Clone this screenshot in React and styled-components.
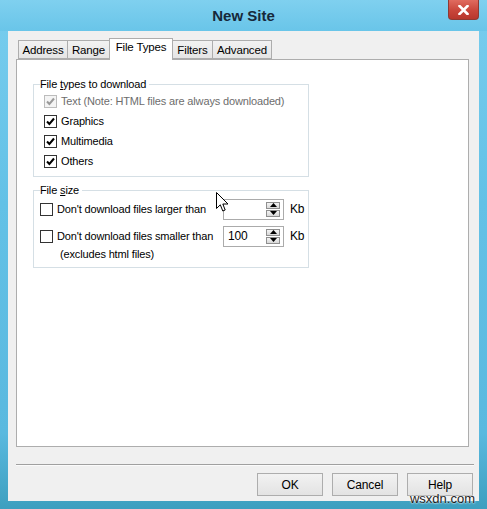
import React from 'react';
import styled, { createGlobalStyle } from 'styled-components';

const GlobalStyle = createGlobalStyle`
  html, body { margin: 0; padding: 0; }
  body {
    width: 487px;
    height: 509px;
    overflow: hidden;
    background: #5cbde2;
    font-family: "Liberation Sans", Arial, sans-serif;
    font-size: 11px;
    letter-spacing: -0.15px;
    color: #000;
  }
`;

const Window = styled.div`
  position: relative;
  width: 487px;
  height: 509px;
  display: flex;
  flex-direction: column;
  background: linear-gradient(180deg, #78cdee 0%, #63c1e6 40%, #5ab9df 85%, #3d9fbf 100%);
  box-sizing: border-box;
`;

const TitleBar = styled.div`
  height: 31px;
  display: grid;
  grid-template-columns: 1fr auto 1fr;
  align-items: start;
  background: linear-gradient(180deg, #7fd0ef 0%, #69c5e9 100%);
`;

const Title = styled.div`
  grid-column: 2;
  font-weight: 700;
  font-size: 15px;
  letter-spacing: 0;
  color: #16283a;
  line-height: 31px;
`;

const CloseButton = styled.div`
  grid-column: 3;
  justify-self: end;
  margin-right: 8px;
  width: 31px;
  height: 20px;
  box-sizing: border-box;
  border: 1px solid #8e3a33;
  border-top: none;
  border-radius: 0 0 4px 4px;
  background: linear-gradient(180deg, #e06b5f 0%, #c9463b 55%, #b8372d 100%);
  display: flex;
  align-items: center;
  justify-content: center;
`;

const Client = styled.div`
  flex: 1;
  margin: 0 8px 8px 8px;
  background: #f0f0f0;
  padding: 7px 5px 0 8px;
  display: flex;
  flex-direction: column;
`;

const TabStrip = styled.div`
  display: flex;
  align-items: flex-end;
  padding-left: 2px;
  height: 21px;
`;

const Tab = styled.div`
  position: relative;
  box-sizing: border-box;
  width: ${({ $w }) => $w}px;
  height: ${({ $active }) => ($active ? '22px' : '19px')};
  margin: ${({ $active }) => ($active ? '0 0 -1px -1px' : '0 0 0 -1px')};
  border: 1px solid #adadad;
  border-bottom: ${({ $active }) => ($active ? 'none' : '1px solid #adadad')};
  background: ${({ $active }) => ($active ? '#fff' : 'linear-gradient(180deg, #f2f2f2, #e5e5e5)')};
  z-index: ${({ $active }) => ($active ? 1 : 0)};
  line-height: ${({ $active }) => ($active ? '17px' : '19px')};
  font-size: 11.5px;
  text-align: center;
  white-space: nowrap;

  &:first-child { margin-left: 0; }
`;

const Panel = styled.div`
  height: 388px;
  box-sizing: border-box;
  margin-right: 5px;
  border: 1px solid #adadad;
  background: #fff;
  padding: 17px 0 0 16px;
  display: flex;
  flex-direction: column;
  gap: 6px;
`;

const GroupBox = styled.fieldset`
  width: 276px;
  box-sizing: border-box;
  margin: 0;
  border: 1px solid #d5dfe5;
  padding: ${({ $pad }) => $pad};
  display: flex;
  flex-direction: column;
  min-width: 0;
`;

const Legend = styled.legend`
  padding: 0 3px 0 0;
  margin-left: 0;
  line-height: 14px;
`;

const Hot = styled.span`
  text-decoration: underline;
`;

const CheckRow = styled.div`
  display: flex;
  align-items: center;
  height: 20px;
  gap: 4px;
  padding-left: ${({ $indent }) => $indent || 0};
  color: ${({ $disabled }) => ($disabled ? '#6d6d6d' : '#000')};
  white-space: nowrap;
`;

const Box = styled.span`
  width: 13px;
  height: 13px;
  box-sizing: border-box;
  border: 1px solid ${({ $disabled }) => ($disabled ? '#bcbcbc' : '#333')};
  background: ${({ $disabled }) => ($disabled ? '#f4f4f4' : '#fff')};
  display: flex;
  align-items: center;
  justify-content: center;
  flex-shrink: 0;
`;

const SizeRows = styled.div`
  display: flex;
  flex-direction: column;
  gap: 3px;
`;

const SizeRow = styled.div`
  display: grid;
  grid-template-columns: 177px 61px auto;
  column-gap: 6px;
  align-items: center;
  height: 24px;
`;

const NoteLine = styled.div`
  padding-left: 20px;
  line-height: 12px;
  white-space: nowrap;
`;

const SpinBox = styled.div`
  height: 21px;
  box-sizing: border-box;
  border: 1px solid #ababab;
  background: #fff;
  display: flex;
  align-items: center;
  justify-content: space-between;
  padding: 0 3px 0 4px;
  font-size: 12px;
`;

const SpinButtons = styled.div`
  display: flex;
  flex-direction: column;
  gap: 1px;
`;

const SpinBtn = styled.div`
  width: 14px;
  height: 7px;
  box-sizing: border-box;
  border: 1px solid #8f8f8f;
  background: linear-gradient(180deg, #f4f4f4, #d8d8d8);
  display: flex;
  align-items: center;
  justify-content: center;
`;

const Unit = styled.span`
  font-size: 12px;
`;

const Separator = styled.div`
  margin-top: 17px;
  height: 1px;
  background: #a0a0a0;
  border-bottom: 1px solid #fbfbfb;
`;

const ButtonRow = styled.div`
  display: flex;
  justify-content: flex-end;
  gap: 9px;
  margin: 7px 1px 0 0;
`;

const Button = styled.div`
  width: 66px;
  height: 23px;
  box-sizing: border-box;
  border: 1px solid #adadad;
  background: linear-gradient(180deg, #f2f2f2, #e3e3e3);
  display: flex;
  align-items: center;
  justify-content: center;
  font-size: 12px;
`;

const Cursor = styled.svg`
  position: absolute;
  left: 216px;
  top: 192px;
`;

const Watermark = styled.div`
  position: absolute;
  right: 12px;
  bottom: 3px;
  font-size: 13px;
  letter-spacing: 0;
  color: #1c1c1c;
  text-shadow: 0 0 2px #fff, 0 0 2px #fff;
`;

function Check({ checked, disabled }) {
  return (
    <Box $disabled={disabled}>
      {checked && (
        <svg width="9" height="9" viewBox="0 0 9 9">
          <path
            d="M1 4.5 L3.4 7 L8 1.5"
            fill="none"
            stroke={disabled ? '#9a9a9a' : '#000'}
            strokeWidth="2"
          />
        </svg>
      )}
    </Box>
  );
}

function Spin({ value }) {
  return (
    <SpinBox>
      <span>{value}</span>
      <SpinButtons>
        <SpinBtn>
          <svg width="7" height="4" viewBox="0 0 7 4"><path d="M0 4 L3.5 0 L7 4 Z" fill="#000" /></svg>
        </SpinBtn>
        <SpinBtn>
          <svg width="7" height="4" viewBox="0 0 7 4"><path d="M0 0 L7 0 L3.5 4 Z" fill="#000" /></svg>
        </SpinBtn>
      </SpinButtons>
    </SpinBox>
  );
}

const tabs = [
  { label: 'Address', w: 50 },
  { label: 'Range', w: 43 },
  { label: 'File Types', w: 64, active: true },
  { label: 'Filters', w: 41 },
  { label: 'Advanced', w: 60 },
];

const fileTypes = [
  { label: 'Text (Note: HTML files are always downloaded)', disabled: true },
  { label: 'Graphics' },
  { label: 'Multimedia' },
  { label: 'Others' },
];

export default function App() {
  return (
    <>
      <GlobalStyle />
      <Window>
        <TitleBar>
          <Title>New Site</Title>
          <CloseButton>
            <svg width="11" height="10" viewBox="0 0 11 10">
              <path d="M1.5 1 L9.5 9 M9.5 1 L1.5 9" stroke="#fff" strokeWidth="2.6" strokeLinecap="square" />
            </svg>
          </CloseButton>
        </TitleBar>

        <Client>
          <TabStrip>
            {tabs.map(t => (
              <Tab key={t.label} $w={t.w} $active={t.active}>{t.label}</Tab>
            ))}
          </TabStrip>

          <Panel>
            <GroupBox $pad="0 0 5px 6px">
              <Legend>File <Hot>t</Hot>ypes to download</Legend>
              {fileTypes.map(f => (
                <CheckRow key={f.label} $indent="4px" $disabled={f.disabled}>
                  <Check checked disabled={f.disabled} />
                  {f.label}
                </CheckRow>
              ))}
            </GroupBox>

            <GroupBox $pad="0 0 7px 6px">
              <Legend>File <Hot>s</Hot>ize</Legend>
              <SizeRows>
                <SizeRow>
                  <CheckRow>
                    <Check />
                    Don't download files larger than
                  </CheckRow>
                  <Spin value="" />
                  <Unit>Kb</Unit>
                </SizeRow>
                <SizeRow>
                  <CheckRow>
                    <Check />
                    Don't download files smaller than
                  </CheckRow>
                  <Spin value="100" />
                  <Unit>Kb</Unit>
                </SizeRow>
              </SizeRows>
              <NoteLine>(excludes html files)</NoteLine>
            </GroupBox>
          </Panel>

          <Separator />

          <ButtonRow>
            <Button>OK</Button>
            <Button>Cancel</Button>
            <Button>Help</Button>
          </ButtonRow>
        </Client>

        <Cursor width="13" height="21" viewBox="0 0 13 21">
          <path
            d="M0.5 0.5 L0.5 16.5 L4.3 12.8 L6.8 19 L9.2 18 L6.8 12 L12 12 Z"
            fill="#fff"
            stroke="#000"
            strokeWidth="1"
          />
        </Cursor>
        <Watermark>wsxdn.com</Watermark>
      </Window>
    </>
  );
}
